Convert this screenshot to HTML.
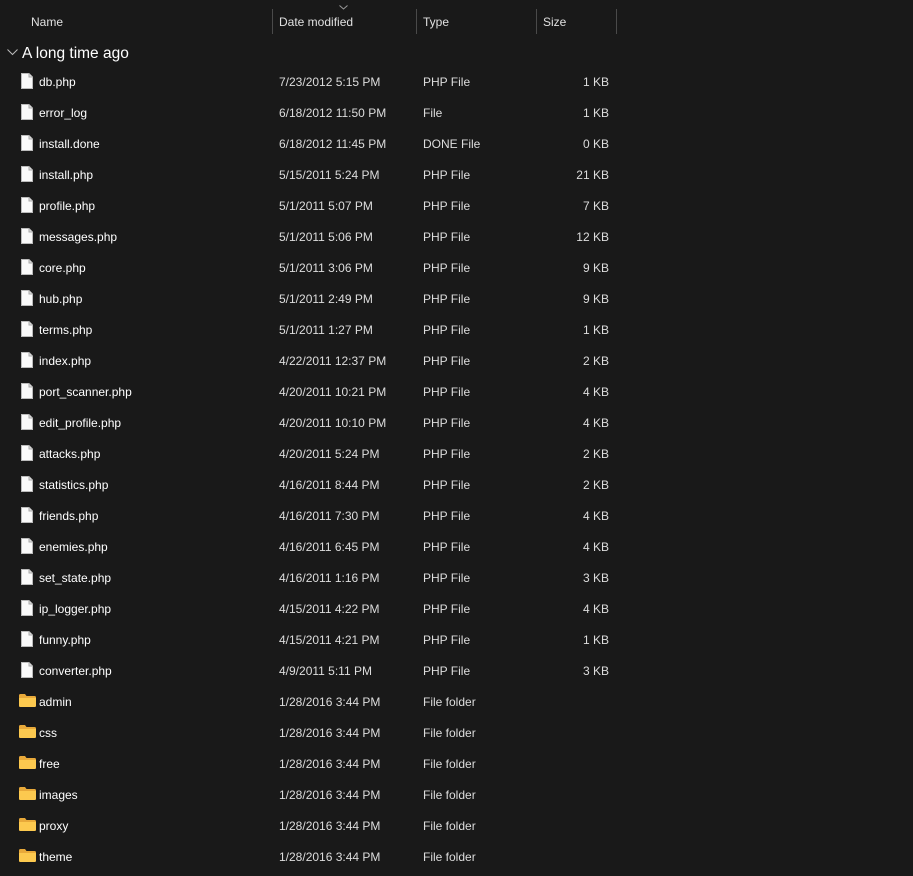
<!DOCTYPE html>
<html><head><meta charset="utf-8"><style>
*{margin:0;padding:0;box-sizing:border-box}
body{width:913px;height:876px;background:#191919;color:#fff;font-family:"Liberation Sans",sans-serif;font-size:12px;position:relative;overflow:hidden}
.a{position:absolute;white-space:nowrap}
.sep{position:absolute;top:9px;width:1px;height:25px;background:#4a4a4a}
.hd{color:#e0e0e0;top:15px}
</style></head><body>
<div class="a hd" style="left:31px">Name</div>
<div class="sep" style="left:272px"></div>
<svg class="a" style="left:339px;top:5px" width="9" height="5"><path d="M0.5 0.5L4.5 4L8.5 0.5" stroke="#999" fill="none"/></svg>
<div class="a hd" style="left:279px">Date modified</div>
<div class="sep" style="left:416px"></div>
<div class="a hd" style="left:423px">Type</div>
<div class="sep" style="left:536px"></div>
<div class="a hd" style="left:543px">Size</div>
<div class="sep" style="left:616px"></div>
<svg class="a" style="left:7px;top:49px" width="11" height="7"><path d="M0.5 0.5L5.5 5.5L10.5 0.5" stroke="#bbb" fill="none"/></svg>
<div class="a" style="left:22px;top:45px;font-size:15.5px">A long time ago</div>
<div id="rows"></div>
<script>
var d=[["db.php","7/23/2012 5:15 PM","PHP File","1 KB"],["error_log","6/18/2012 11:50 PM","File","1 KB"],["install.done","6/18/2012 11:45 PM","DONE File","0 KB"],["install.php","5/15/2011 5:24 PM","PHP File","21 KB"],["profile.php","5/1/2011 5:07 PM","PHP File","7 KB"],["messages.php","5/1/2011 5:06 PM","PHP File","12 KB"],["core.php","5/1/2011 3:06 PM","PHP File","9 KB"],["hub.php","5/1/2011 2:49 PM","PHP File","9 KB"],["terms.php","5/1/2011 1:27 PM","PHP File","1 KB"],["index.php","4/22/2011 12:37 PM","PHP File","2 KB"],["port_scanner.php","4/20/2011 10:21 PM","PHP File","4 KB"],["edit_profile.php","4/20/2011 10:10 PM","PHP File","4 KB"],["attacks.php","4/20/2011 5:24 PM","PHP File","2 KB"],["statistics.php","4/16/2011 8:44 PM","PHP File","2 KB"],["friends.php","4/16/2011 7:30 PM","PHP File","4 KB"],["enemies.php","4/16/2011 6:45 PM","PHP File","4 KB"],["set_state.php","4/16/2011 1:16 PM","PHP File","3 KB"],["ip_logger.php","4/15/2011 4:22 PM","PHP File","4 KB"],["funny.php","4/15/2011 4:21 PM","PHP File","1 KB"],["converter.php","4/9/2011 5:11 PM","PHP File","3 KB"],["admin","1/28/2016 3:44 PM","File folder",""],["css","1/28/2016 3:44 PM","File folder",""],["free","1/28/2016 3:44 PM","File folder",""],["images","1/28/2016 3:44 PM","File folder",""],["proxy","1/28/2016 3:44 PM","File folder",""],["theme","1/28/2016 3:44 PM","File folder",""]];
var h="";
d.forEach(function(r,i){
 var y=74+i*31, t=y+1;
 var ic=r[2]=="File folder"
  ?'<svg class="a" style="left:19px;top:'+y+'px" width="17" height="13"><path d="M0 1.5Q0 0 1.5 0H6L7.5 2H15.5Q17 2 17 3.5V11.5Q17 13 15.5 13H1.5Q0 13 0 11.5Z" fill="#e8a93a"/><path d="M0 4H17V11.5Q17 13 15.5 13H1.5Q0 13 0 11.5Z" fill="#fcc94f"/></svg>'
  :'<svg class="a" style="left:21px;top:'+(y-1)+'px" width="12" height="16"><path d="M0.5 0.5H8L11.5 4V15.5H0.5Z" fill="#fafafa" stroke="#bbb" stroke-width="1"/><path d="M8 0.5V4H11.5" fill="#ddd" stroke="#aaa"/></svg>';
 h+=ic+'<div class="a" style="left:39px;top:'+t+'px">'+r[0]+'</div><div class="a" style="left:279px;top:'+t+'px;color:#ddd">'+r[1]+'</div><div class="a" style="left:423px;top:'+t+'px;color:#ddd">'+r[2]+'</div><div class="a" style="right:304px;top:'+t+'px;color:#ddd">'+r[3]+'</div>';
});
document.getElementById("rows").innerHTML=h;
</script>
</body></html>
